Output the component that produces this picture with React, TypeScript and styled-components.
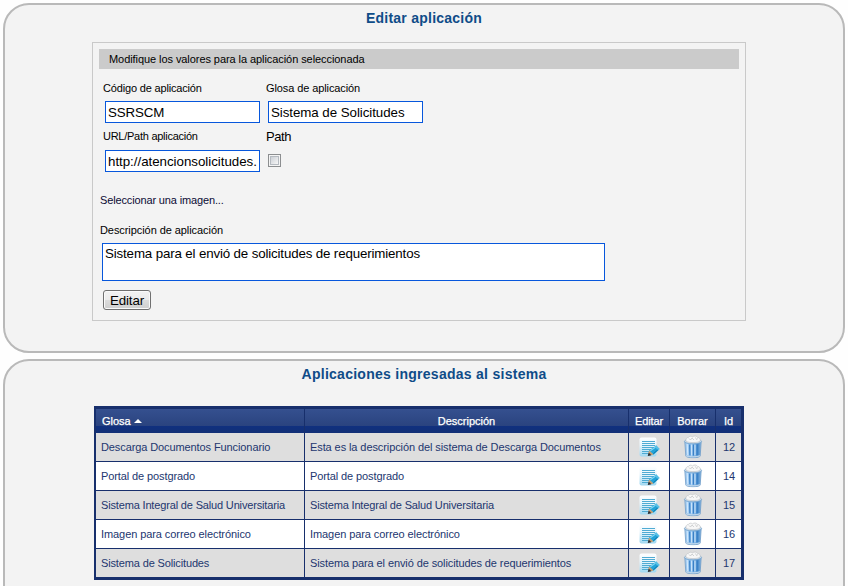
import React from "react";
import styled, { createGlobalStyle } from "styled-components";

const GlobalStyle = createGlobalStyle`
  * { box-sizing: border-box; }
  body {
    margin: 0;
    background: #fff;
    overflow: hidden;
    font-family: "Liberation Sans", Arial, sans-serif;
    color: #000;
  }
`;

const Page = styled.main`
  display: flex;
  flex-direction: column;
  gap: 6px;
  height: 586px;
  padding: 3px 3px 0;
  overflow: hidden;
  background: #fefefe;
`;

const Panel = styled.section<{ $height: number }>`
  flex: none;
  width: 842px;
  height: ${(p) => p.$height}px;
  border: 2px solid #b9b9b9;
  border-radius: 26px;
  background: #f3f3f3;
`;

const Title = styled.h1<{ $track: number }>`
  margin: 0;
  padding-top: 5px;
  height: 37px;
  font-size: 14px;
  line-height: 17px;
  font-weight: bold;
  letter-spacing: ${(p) => p.$track}px;
  text-align: center;
  color: #0f4c88;
`;

const Form = styled.form`
  display: flex;
  flex-direction: column;
  width: 654px;
  height: 279px;
  margin-left: 87px;
  padding: 6px;
  border: 1px solid #c9c9c9;
`;

const Banner = styled.div`
  flex: none;
  height: 20px;
  padding-left: 10px;
  background: #cbcbcb;
  font-size: 11px;
  line-height: 21px;
  letter-spacing: -0.07px;
`;

const Fields = styled.div`
  display: grid;
  grid-template-columns: 155px 155px;
  grid-template-rows: 22px 22px;
  column-gap: 8px;
  row-gap: 27px;
  margin: 32px 0 0 6px;
`;

const Field = styled.div`
  position: relative;
  height: 22px;
`;

const FieldLabel = styled.label<{ $large?: boolean; $top?: number; $track?: number }>`
  position: absolute;
  left: -2px;
  top: ${(p) => p.$top ?? -20}px;
  white-space: nowrap;
  font-size: ${(p) => (p.$large ? 13 : 11)}px;
  line-height: 14px;
  letter-spacing: ${(p) => p.$track ?? 0}px;
`;

const Input = styled.input<{ $track: number }>`
  display: block;
  width: 155px;
  height: 22px;
  padding: 1px 2px 0;
  border: 1px solid #0757dc;
  border-radius: 0;
  background: #fff;
  font: 13.33px "Liberation Sans", Arial, sans-serif;
  letter-spacing: ${(p) => p.$track}px;
  color: #000;
  outline: none;
`;

const Checkbox = styled.input`
  appearance: none;
  display: block;
  width: 13px;
  height: 13px;
  margin: 4px 0 0;
  padding: 2px;
  border: 1px solid #8c8e90;
  background:
    linear-gradient(135deg, #ccd0d6, #f6f6f6) content-box,
    linear-gradient(#b5bac0, #b5bac0) center / 9px 9px no-repeat,
    #f4f4f4;
`;

const Note = styled.div<{ $top: number; $track: number }>`
  margin: ${(p) => p.$top}px 0 0 1px;
  height: 14px;
  font-size: 11px;
  line-height: 14px;
  letter-spacing: ${(p) => p.$track}px;
`;

const ImagePicker = styled(Note)`
  color: #0b0b35;
`;

const Description = styled.textarea`
  flex: none;
  width: 503px;
  height: 38px;
  margin: 6px 0 0 3px;
  padding: 2px;
  border: 1px solid #0757dc;
  background: #fff;
  font: 13.33px/16px "Liberation Sans", Arial, sans-serif;
  letter-spacing: -0.15px;
  color: #000;
  resize: none;
  outline: none;
  overflow: hidden;
`;

const Button = styled.button`
  width: 48px;
  height: 20px;
  margin: 9px 0 0 4px;
  padding: 1px 0 0;
  border: 1px solid #707070;
  border-radius: 3px;
  background: linear-gradient(#f2f2f2 0, #ebebeb 50%, #dcdcdc 50%, #cfcfcf 100%);
  box-shadow: inset 0 0 0 1px #fafafa;
  font: 13.33px/16px "Liberation Sans", Arial, sans-serif;
  letter-spacing: -0.1px;
  color: #000;
`;

const Table = styled.div`
  width: 650px;
  height: 174px;
  margin: 8px 0 0 89px;
  border: solid #172f6c;
  border-width: 3px 3px 3px 2px;
  background: #172f6c;
`;

const Row = styled.div<{ $odd?: boolean }>`
  display: grid;
  grid-template-columns: 208px 323px 40px 45px 25px;
  grid-template-rows: 28px;
  column-gap: 1px;
  height: 29px;
  & > * {
    background: ${(p) => (p.$odd ? "#dedede" : "#ffffff")};
  }
`;

const HeaderRow = styled(Row)`
  grid-template-rows: 24px;
  height: 24px;
  & > * {
    background: linear-gradient(#35508f 0, #2a437f 17px, #10307f 17px, #123078 23px);
  }
`;

const HeaderCell = styled.div<{ $left?: boolean; $track?: number }>`
  display: flex;
  align-items: center;
  justify-content: ${(p) => (p.$left ? "flex-start" : "center")};
  gap: 3px;
  padding: 0 0 0 ${(p) => (p.$left ? 6 : 0)}px;
  font-size: 11px;
  letter-spacing: ${(p) => p.$track ?? 0}px;
  color: #fff;
  -webkit-text-stroke: 0.25px #fff;
`;

const Cell = styled.div<{ $track?: number }>`
  padding-left: 5px;
  font-size: 11px;
  line-height: 29px;
  letter-spacing: ${(p) => p.$track ?? 0}px;
  white-space: nowrap;
  color: #22366f;
`;

const IdCell = styled(Cell)`
  padding-left: 7px;
`;

const IconCell = styled.div`
  display: flex;
  align-items: center;
  justify-content: center;
`;

const SortArrow = () => (
  <svg width="8" height="4" viewBox="0 0 8 4">
    <path d="M0 4 4 0l4 4z" fill="#fff" />
  </svg>
);

const EditIcon = () => (
  <svg width="22" height="22" viewBox="0 0 22 22">
    <defs>
      <linearGradient id="paper" x1="0" y1="0" x2="0" y2="1">
        <stop offset="0" stopColor="#fdfeff" />
        <stop offset=".4" stopColor="#eaf6fc" />
        <stop offset="1" stopColor="#a0d8f1" />
      </linearGradient>
    </defs>
    <rect x="1.5" y="1.5" width="17" height="19" rx="2" fill="url(#paper)" />
    <path
      d="M4 5.5h13M4 7.5h13M4 9.5h13M4 11.5h12M4 13.5h9M4 15.5h7M4 17.5h6"
      stroke="#4fabd3"
      strokeWidth="1"
    />
    <path d="m11 14.6 5.7-4.1 4 3.4-5.2 4.8z" fill="#22a3d8" />
    <path d="m12.3 14.8 5-3.6" stroke="#7fd6f3" strokeWidth="1.2" />
    <path d="m15.3 17.8 4.5-4" stroke="#0d78ad" strokeWidth="1" />
    <path d="m16.7 10.5 1.4-1.4 3.7 3.9-1.4 1.2z" fill="#55bfe6" />
    <path d="m9.8 20 1.3-5.4 4.4 4z" fill="#c79d6f" />
    <path d="m9.8 20 .8-3.4 2.8 2.6z" fill="#26303c" />
  </svg>
);

const TrashIcon = () => (
  <svg width="20" height="24" viewBox="0 0 20 24">
    <defs>
      <linearGradient id="can" x1="0" y1="0" x2="1" y2="0">
        <stop offset="0" stopColor="#a5cbee" />
        <stop offset=".4" stopColor="#8fc3f3" />
        <stop offset=".8" stopColor="#4489cc" />
        <stop offset="1" stopColor="#8fbbe2" />
      </linearGradient>
    </defs>
    <path d="M1.8 6.5h16.4L17.2 21c-.2 2.2-14.2 2.2-14.4 0z" fill="url(#can)" stroke="#6f9cc8" strokeWidth=".8" />
    <path d="M4.2 9 4.8 20M8.7 9.5v11M12 9.5v11" stroke="#d3e9fc" strokeWidth="1.1" />
    <path d="M6.7 9.5l.2 11M10.4 9.5v11M14.4 9.5l-.2 11" stroke="#3a80c6" strokeWidth="1.2" />
    <path d="M3.2 20.6c2 1.7 11.6 1.7 13.6 0" fill="none" stroke="#bdd5ea" strokeWidth="1.3" />
    <ellipse cx="10" cy="6.4" rx="8.6" ry="2.4" fill="#c5dcf0" stroke="#7aa5ca" strokeWidth=".8" />
    <path
      d="M3 6.4c-.5-2 .5-4 2.5-4 .5-1.5 3-1.5 4-.5C11 .4 14 .9 14.5 2.4c2 0 3.5 2 2.5 4-3 1.6-11 1.6-14 0z"
      fill="#f7f7f7"
      stroke="#c3c6c9"
      strokeWidth=".7"
    />
    <path d="m6 3.5 1.5 1.5 1.5-2 2 2M12.5 2.5l1 2 1.5-1" fill="none" stroke="#b5b8bb" strokeWidth=".6" />
  </svg>
);

type Entry = { id: string; name: string; nameTrack: number; text: string; textTrack: number };

const entries: Entry[] = [
  {
    id: "12",
    name: "Descarga Documentos Funcionario",
    nameTrack: -0.1,
    text: "Esta es la descripción del sistema de Descarga Documentos",
    textTrack: -0.09,
  },
  { id: "14", name: "Portal de postgrado", nameTrack: -0.1, text: "Portal de postgrado", textTrack: -0.1 },
  {
    id: "15",
    name: "Sistema Integral de Salud Universitaria",
    nameTrack: -0.16,
    text: "Sistema Integral de Salud Universitaria",
    textTrack: -0.16,
  },
  {
    id: "16",
    name: "Imagen para correo electrónico",
    nameTrack: -0.08,
    text: "Imagen para correo electrónico",
    textTrack: -0.08,
  },
  {
    id: "17",
    name: "Sistema de Solicitudes",
    nameTrack: -0.14,
    text: "Sistema para el envió de solicitudes de requerimientos",
    textTrack: -0.1,
  },
];

export default function App() {
  return (
    <Page>
      <GlobalStyle />
      <Panel $height={350}>
        <Title $track={0.24}>Editar aplicación</Title>
        <Form>
          <Banner>Modifique los valores para la aplicación seleccionada</Banner>
          <Fields>
            <Field>
              <FieldLabel $track={-0.17}>Código de aplicación</FieldLabel>
              <Input $track={-0.15} defaultValue="SSRSCM" />
            </Field>
            <Field>
              <FieldLabel $track={-0.1}>Glosa de aplicación</FieldLabel>
              <Input $track={-0.06} defaultValue="Sistema de Solicitudes" />
            </Field>
            <Field>
              <FieldLabel $top={-21} $track={-0.26}>URL/Path aplicación</FieldLabel>
              <Input $track={-0.03} defaultValue="http://atencionsolicitudes." />
            </Field>
            <Field>
              <FieldLabel $large $top={-20} $track={-0.4}>Path</FieldLabel>
              <Checkbox type="checkbox" />
            </Field>
          </Fields>
          <ImagePicker $top={21} $track={-0.14}>Seleccionar una imagen...</ImagePicker>
          <Note $top={16} $track={-0.07}>Descripción de aplicación</Note>
          <Description defaultValue="Sistema para el envió de solicitudes de requerimientos" />
          <Button type="button">Editar</Button>
        </Form>
      </Panel>
      <Panel $height={300}>
        <Title $track={0.27}>Aplicaciones ingresadas al sistema</Title>
        <Table>
          <HeaderRow>
            <HeaderCell $left>Glosa <SortArrow /></HeaderCell>
            <HeaderCell>Descripción</HeaderCell>
            <HeaderCell $track={-0.1}>Editar</HeaderCell>
            <HeaderCell>Borrar</HeaderCell>
            <HeaderCell>Id</HeaderCell>
          </HeaderRow>
          {entries.map((entry, i) => (
            <Row key={entry.id} $odd={i % 2 === 0}>
              <Cell $track={entry.nameTrack}>{entry.name}</Cell>
              <Cell $track={entry.textTrack}>{entry.text}</Cell>
              <IconCell><EditIcon /></IconCell>
              <IconCell><TrashIcon /></IconCell>
              <IdCell>{entry.id}</IdCell>
            </Row>
          ))}
        </Table>
      </Panel>
    </Page>
  );
}
